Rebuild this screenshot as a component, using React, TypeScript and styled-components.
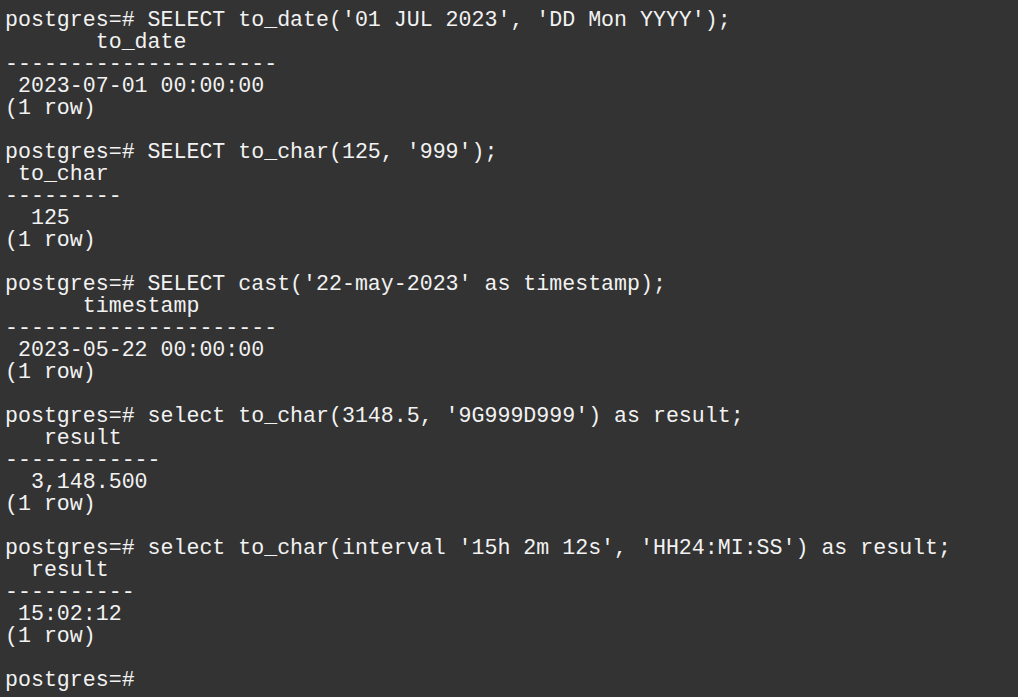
import React from "react";
import styled, { createGlobalStyle } from "styled-components";

const Global = createGlobalStyle`
  html, body { margin: 0; padding: 0; background: #333333; }
  body { overflow: hidden; }
`;

const Terminal = styled.div`
  box-sizing: border-box;
  width: 1018px;
  height: 697px;
  background: #333333;
  color: #f2f2f2;
  padding: 9px 0 0 5px;
  font-family: "Liberation Mono", "DejaVu Sans Mono", monospace;
  font-size: 21.6px;
  line-height: 22px;
  display: flex;
  flex-direction: column;
`;

const Line = styled.div`
  white-space: pre;
  height: 22px;
`;

const lines = [
  "postgres=# SELECT to_date('01 JUL 2023', 'DD Mon YYYY');",
  "       to_date",
  "---------------------",
  " 2023-07-01 00:00:00",
  "(1 row)",
  "",
  "postgres=# SELECT to_char(125, '999');",
  " to_char",
  "---------",
  "  125",
  "(1 row)",
  "",
  "postgres=# SELECT cast('22-may-2023' as timestamp);",
  "      timestamp",
  "---------------------",
  " 2023-05-22 00:00:00",
  "(1 row)",
  "",
  "postgres=# select to_char(3148.5, '9G999D999') as result;",
  "   result",
  "------------",
  "  3,148.500",
  "(1 row)",
  "",
  "postgres=# select to_char(interval '15h 2m 12s', 'HH24:MI:SS') as result;",
  "  result",
  "----------",
  " 15:02:12",
  "(1 row)",
  "",
  "postgres=#",
];

export default function App() {
  return (
    <>
      <Global />
      <Terminal>
        {lines.map((l, i) => (
          <Line key={i}>{l}</Line>
        ))}
      </Terminal>
    </>
  );
}
